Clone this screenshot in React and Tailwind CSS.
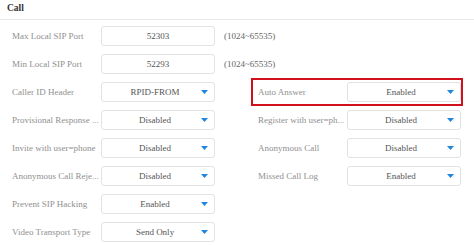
import React from 'react';

const left = [
  { label: 'Caller ID Header', value: 'RPID-FROM' },
  { label: 'Provisional Response ...', value: 'Disabled' },
  { label: 'Invite with user=phone', value: 'Disabled' },
  { label: 'Anonymous Call Reje...', value: 'Disabled' },
  { label: 'Prevent SIP Hacking', value: 'Enabled' },
  { label: 'Video Transport Type', value: 'Send Only' },
];

const right = [
  { label: 'Auto Answer', value: 'Enabled', active: true },
  { label: 'Register with user=ph...', value: 'Disabled' },
  { label: 'Anonymous Call', value: 'Disabled' },
  { label: 'Missed Call Log', value: 'Enabled' },
];

function Arrow() {
  return (
    <svg width="7" height="4" viewBox="0 0 7 4" className="absolute right-[6px] top-1/2 -translate-y-1/2">
      <path d="M0 0 L7 0 L3.5 4 Z" fill="#1f86e0" />
    </svg>
  );
}

function Field({ label, value, select, active }) {
  return (
    <div
      className={`w-[212px] h-[28px] flex items-center pl-[5px] border-2 ${
        active ? 'border-[#d0101b]' : 'border-transparent'
      }`}
    >
      <div className="w-[89px] whitespace-nowrap text-[#8f8f8f]">{label}</div>
      <div className="relative w-[114px] h-5 border border-[#e3e3e3] rounded-[3px] bg-white flex items-center justify-center text-[#555]">
        <span className={select ? 'pr-[6px]' : ''}>{value}</span>
        {select && <Arrow />}
      </div>
    </div>
  );
}

export default function App() {
  return (
    <main
      className="w-[474px] h-[245px] bg-white overflow-hidden text-[9px] leading-none"
      style={{ fontFamily: '"Liberation Serif", "Times New Roman", serif' }}
    >
      {/* Header */}
      <div className="h-[20px] border-b border-[#e8e8e8] flex items-center pl-[7px] pb-[2px]">
        <span className="font-bold text-[#333] text-[9.5px]">Call</span>
      </div>

      <div className="pt-[2px] pl-[5px]">
        {/* Ports */}
        <div className="flex items-center">
          <Field label="Max Local SIP Port" value="52303" />
          <span className="ml-[7px] text-[#666] whitespace-nowrap">(1024~65535)</span>
        </div>
        <div className="flex items-center">
          <Field label="Min Local SIP Port" value="52293" />
          <span className="ml-[7px] text-[#666] whitespace-nowrap">(1024~65535)</span>
        </div>

        {/* Selects */}
        <div className="flex gap-[34px]">
          <div className="flex flex-col">
            {left.map((f) => (
              <Field key={f.label} {...f} select />
            ))}
          </div>
          <div className="flex flex-col">
            {right.map((f) => (
              <Field key={f.label} {...f} select />
            ))}
          </div>
        </div>
      </div>
    </main>
  );
}
